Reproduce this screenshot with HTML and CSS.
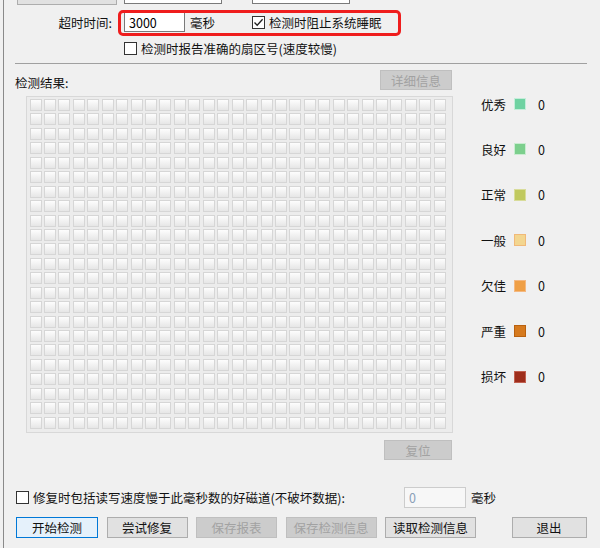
FILE: index.html
```html
<!DOCTYPE html>
<html lang="zh-CN">
<head>
    <meta charset="UTF-8">
    <meta name="viewport" content="width=device-width, initial-scale=1.0">
    <title>磁盘检测</title>
    <link rel="stylesheet" href="styles.css">
</head>
<body>
    <div class="window">
        <div class="stub-row">
            <div class="stub stub-btn"></div>
            <div class="stub stub-input"></div>
            <div class="stub stub-input stub-input-2"></div>
        </div>

        <div class="row timeout-row">
            <label class="field-label" for="timeout">超时时间:</label>
            <input type="text" id="timeout" class="text-input" value="3000">
            <span class="unit">毫秒</span>
            <label class="check">
                <span class="box">
                    <svg width="11" height="11" viewBox="0 0 11 11"><path d="M1.5 5.5 L4.2 8.3 L9.6 2.2" fill="none" stroke="#222" stroke-width="1.3"/></svg>
                </span>
                检测时阻止系统睡眠
            </label>
        </div>

        <label class="check sector-check">
            <span class="box"></span>
            检测时报告准确的扇区号(速度较慢)
        </label>

        <div class="separator"></div>

        <div class="results-head">
            <span class="results-title">检测结果:</span>
            <button class="btn disabled detail-btn">详细信息</button>
        </div>

        <div class="results-body">
            <div class="grid-col">
                <div class="block-grid" id="blockGrid"></div>
                <button class="btn disabled reset-btn">复位</button>
            </div>
            <ul class="legend">
                <li><span class="legend-name">优秀</span><span class="swatch excellent"></span><span class="count">0</span></li>
                <li><span class="legend-name">良好</span><span class="swatch good"></span><span class="count">0</span></li>
                <li><span class="legend-name">正常</span><span class="swatch normal"></span><span class="count">0</span></li>
                <li><span class="legend-name">一般</span><span class="swatch fair"></span><span class="count">0</span></li>
                <li><span class="legend-name">欠佳</span><span class="swatch poor"></span><span class="count">0</span></li>
                <li><span class="legend-name">严重</span><span class="swatch severe"></span><span class="count">0</span></li>
                <li><span class="legend-name">损坏</span><span class="swatch broken"></span><span class="count">0</span></li>
            </ul>
        </div>

        <div class="row slow-row">
            <label class="check slow-check">
                <span class="box"></span>
                修复时包括读写速度慢于此毫秒数的好磁道(不破坏数据):
            </label>
            <input type="text" class="text-input slow-input" value="0" disabled>
            <span class="unit">毫秒</span>
        </div>

        <div class="row actions">
            <button class="btn primary w82">开始检测</button>
            <button class="btn w81">尝试修复</button>
            <button class="btn disabled w81">保存报表</button>
            <button class="btn disabled w91">保存检测信息</button>
            <button class="btn w91">读取检测信息</button>
            <button class="btn exit-btn">退出</button>
        </div>

        <div class="highlight"></div>
    </div>

    <script>
        // 填充磁道方块 (29 x 23)
        const grid = document.getElementById('blockGrid');
        for (let i = 0; i < 29 * 23; i++) {
            const cell = document.createElement('div');
            cell.className = 'cell';
            grid.appendChild(cell);
        }
    </script>
</body>
</html>
```

FILE: styles.css
```css
body {
    margin: 0;
    background-color: #f0f0f0;
    font-family: "Noto Sans CJK SC", "Noto Sans", sans-serif;
    font-size: 12.5px;
    color: #111;
}
.window {
    position: relative;
    margin-left: 3px;
    border-left: 1px solid #8a8a8a;
    height: 548px;
    box-sizing: border-box;
}
.stub-row {
    display: flex;
    margin-left: 13px;
}
.stub {
    height: 5px;
    box-sizing: border-box;
}
.stub-btn {
    width: 100px;
    background-color: #e1e1e1;
    border: 1px solid #adadad;
    border-top: none;
}
.stub-input {
    width: 98px;
    height: 4px;
    margin-left: 7px;
    background-color: #fff;
    border: 1px solid #7a7a7a;
    border-top: none;
}
.stub-input-2 {
    margin-left: 30px;
}
.row {
    display: flex;
    align-items: center;
}
.timeout-row {
    margin-top: 7px;
    height: 20px;
}
.field-label {
    width: 108px;
    text-align: right;
    margin-right: 12px;
}
.text-input {
    width: 61px;
    height: 20px;
    box-sizing: border-box;
    border: 1px solid #7a7a7a;
    background-color: #fff;
    padding: 0 4px;
    font-family: inherit;
    font-size: 12.5px;
    color: #000;
    outline: none;
}
.unit {
    margin-left: 5px;
    width: 62px;
}
.check {
    display: flex;
    align-items: center;
    white-space: nowrap;
}
.box {
    width: 13px;
    height: 13px;
    box-sizing: border-box;
    border: 1px solid #333;
    background-color: #fff;
    margin-right: 4px;
    display: flex;
    align-items: center;
    justify-content: center;
}
.sector-check {
    margin-left: 120px;
    margin-top: 10px;
    height: 13px;
}
.separator {
    margin: 8px 0 0 11px;
    width: 572px;
    height: 1px;
    background-color: #a0a0a0;
}
.results-head {
    display: flex;
    justify-content: space-between;
    align-items: flex-start;
    margin: 6px 0 0 11px;
    width: 437px;
    height: 20px;
}
.results-title {
    margin-top: 3px;
}
.btn {
    height: 21px;
    box-sizing: border-box;
    border: 1px solid #adadad;
    background-color: #e1e1e1;
    font-family: inherit;
    font-size: 12.5px;
    color: #111;
    padding: 0;
}
.btn.disabled {
    background-color: #cccccc;
    border-color: #bfbfbf;
    color: #a2a2a2;
}
.btn.primary {
    background-color: #e5f1fb;
    border-color: #0078d7;
}
.detail-btn {
    width: 72px;
    height: 20px;
}
.results-body {
    display: flex;
    margin-top: 6px;
}
.grid-col {
    display: flex;
    flex-direction: column;
    margin-left: 22px;
}
.block-grid {
    width: 427px;
    height: 337px;
    box-sizing: border-box;
    border: 1px solid #d8d8d8;
    background-color: #ececec;
    padding: 2px 0 0 2.5px;
    display: grid;
    grid-template-columns: repeat(29, 12px);
    grid-auto-rows: 12px;
    gap: 2.45px;
}
.cell {
    box-sizing: border-box;
    border: 1px solid #d6d6d6;
    background: linear-gradient(#fdfdfd 0%, #f4f4f4 40%, #e6e6e6 100%);
}
.reset-btn {
    width: 68px;
    height: 20px;
    margin-top: 7px;
    margin-right: 1px;
    align-self: flex-end;
}
.legend {
    list-style: none;
    margin: 0 0 0 28px;
    padding: 0;
    display: flex;
    flex-direction: column;
    gap: 29.45px;
}
.legend li {
    display: flex;
    align-items: center;
    height: 16px;
}
.legend-name {
    width: 24px;
    white-space: nowrap;
}
.swatch {
    width: 12px;
    height: 12px;
    box-sizing: border-box;
    margin-left: 9px;
    border: 1px solid rgba(255, 255, 255, 0.6);
}
.count {
    margin-left: 12px;
}
.excellent { background-color: #6fd2a2; }
.good { background-color: #7ccf8d; }
.normal { background-color: #c0c95f; border-color: #d8dc9a; }
.fair { background-color: #f3d690; border-color: #f1b978; }
.poor { background-color: #ef9f45; border-color: #f4b880; }
.severe { background-color: #d67a1e; border-color: #b9610f; }
.broken { background-color: #9e2d1b; border-color: #c06050; }
.slow-row {
    margin-top: 27px;
    height: 21px;
}
.slow-check {
    margin-left: 12px;
    width: 388px;
}
.slow-input {
    width: 62px;
    height: 21px;
    background-color: #f7f7f7;
    border-color: #cccccc;
    color: #8aa0b8;
}
.actions {
    margin-top: 9px;
    margin-left: 12px;
    gap: 8.5px;
}
.w82 { width: 82px; }
.w81 { width: 81px; }
.w91 { width: 91px; }
.exit-btn {
    width: 75px;
    margin-left: 27px;
}
.highlight {
    position: absolute;
    left: 114px;
    top: 10px;
    width: 283px;
    height: 26px;
    box-sizing: border-box;
    border: 3px solid #ef1d1d;
    border-radius: 5px;
}
```
